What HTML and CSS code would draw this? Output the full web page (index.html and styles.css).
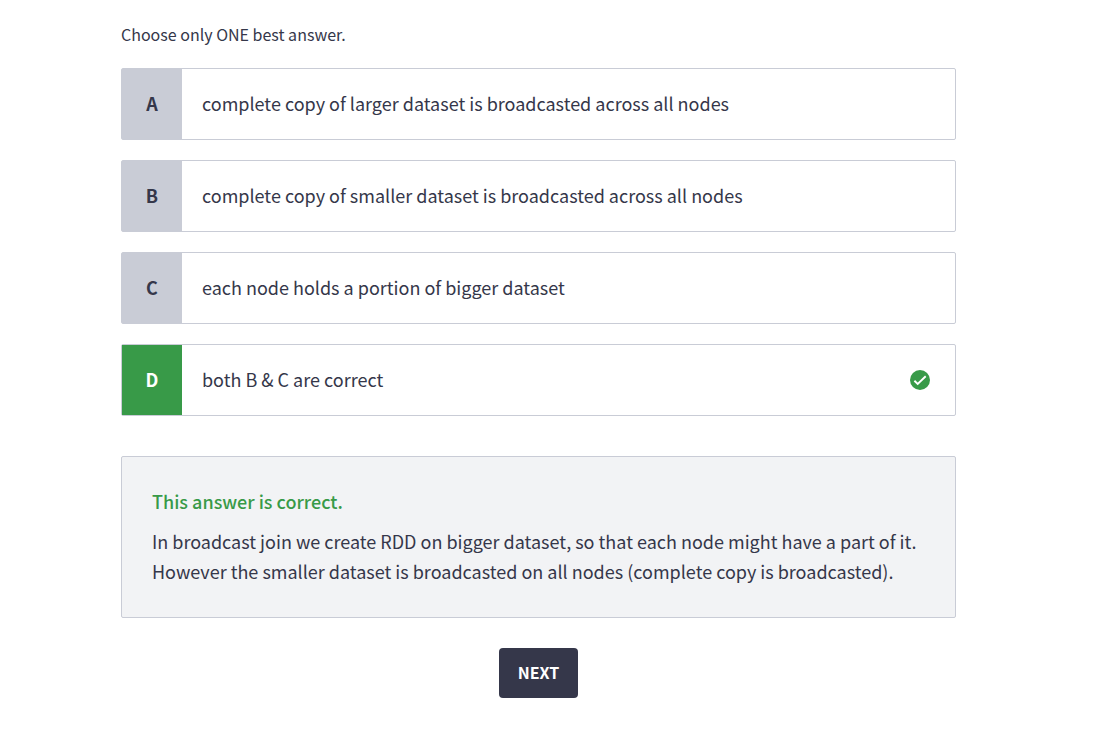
FILE: index.html
```html
<!DOCTYPE html>
<html lang="en">
<head>
<meta charset="utf-8">
<meta name="viewport" content="width=device-width, initial-scale=1">
<title>Quiz question</title>
<link rel="stylesheet" href="styles.css">
</head>
<body>
<main class="quiz">
  <p class="hint">Choose only ONE best answer.</p>
  <div class="answers">
    <button class="answer" type="button"><span class="letter">A</span><span class="text">complete copy of larger dataset is broadcasted across all nodes</span></button>
    <button class="answer" type="button"><span class="letter">B</span><span class="text">complete copy of smaller dataset is broadcasted across all nodes</span></button>
    <button class="answer" type="button"><span class="letter">C</span><span class="text">each node holds a portion of bigger dataset</span></button>
    <button class="answer correct" type="button"><span class="letter">D</span><span class="text">both B &amp; C are correct</span>
      <svg class="check" viewBox="0 0 20 20" role="img" aria-label="Correct"><circle cx="10" cy="10" r="10" fill="#389a48"/><path d="M4.4 10.8l3.3 3.2 8-7.8" fill="none" stroke="#fff" stroke-width="1.9"/></svg>
    </button>
  </div>
  <section class="feedback">
    <h2 class="verdict">This answer is correct.</h2>
    <p class="explanation">In broadcast join we create RDD on bigger dataset, so that each node might have a part of it. However the smaller dataset is broadcasted on all nodes (complete copy is broadcasted).</p>
  </section>
  <button class="next" type="button">NEXT</button>
</main>
</body>
</html>
```
FILE: styles.css
```css
* {
  box-sizing: border-box;
}

body {
  margin: 0;
  background: #fff;
  color: #35374a;
  font-family: "Noto Sans CJK SC", "Noto Sans", sans-serif;
}

.quiz {
  display: flex;
  flex-direction: column;
  padding: 19px 154px 45px 121px;
}

.hint {
  margin: 0 0 19px;
  font-size: 16px;
  line-height: 30px;
}

.answers {
  display: grid;
  gap: 20px;
}

.answer {
  display: flex;
  align-items: center;
  min-height: 72px;
  padding: 0 25px 0 0;
  border: 1px solid #c9ccd6;
  border-radius: 2px;
  background: #fff;
  color: inherit;
  font: inherit;
  font-size: 18px;
  line-height: 30px;
  text-align: left;
}

.letter {
  display: grid;
  place-items: center;
  align-self: stretch;
  flex: 0 0 60px;
  padding-bottom: 2px;
  background: #c9ccd6;
  font-weight: 700;
}

.text {
  flex: 1;
  padding: 19px 20px 21px;
}

.correct .letter {
  background: #389a48;
  color: #fff;
}

.check {
  width: 20px;
  height: 20px;
}

.feedback {
  margin-top: 40px;
  padding: 29px 30px 31px;
  border: 1px solid #c9ccd6;
  border-radius: 2px;
  background: #f2f3f5;
  font-size: 18px;
  line-height: 30px;
}

.verdict {
  margin: 0 0 10px;
  color: #389a48;
  font-size: 18px;
  font-weight: 500;
}

.explanation {
  margin: 0;
}

.next {
  align-self: center;
  margin-top: 30px;
  padding: 9px 19px 11px;
  border: 0;
  border-radius: 4px;
  background: #35374a;
  color: #fff;
  font: inherit;
  font-size: 16px;
  font-weight: 700;
  line-height: 30px;
}
```
